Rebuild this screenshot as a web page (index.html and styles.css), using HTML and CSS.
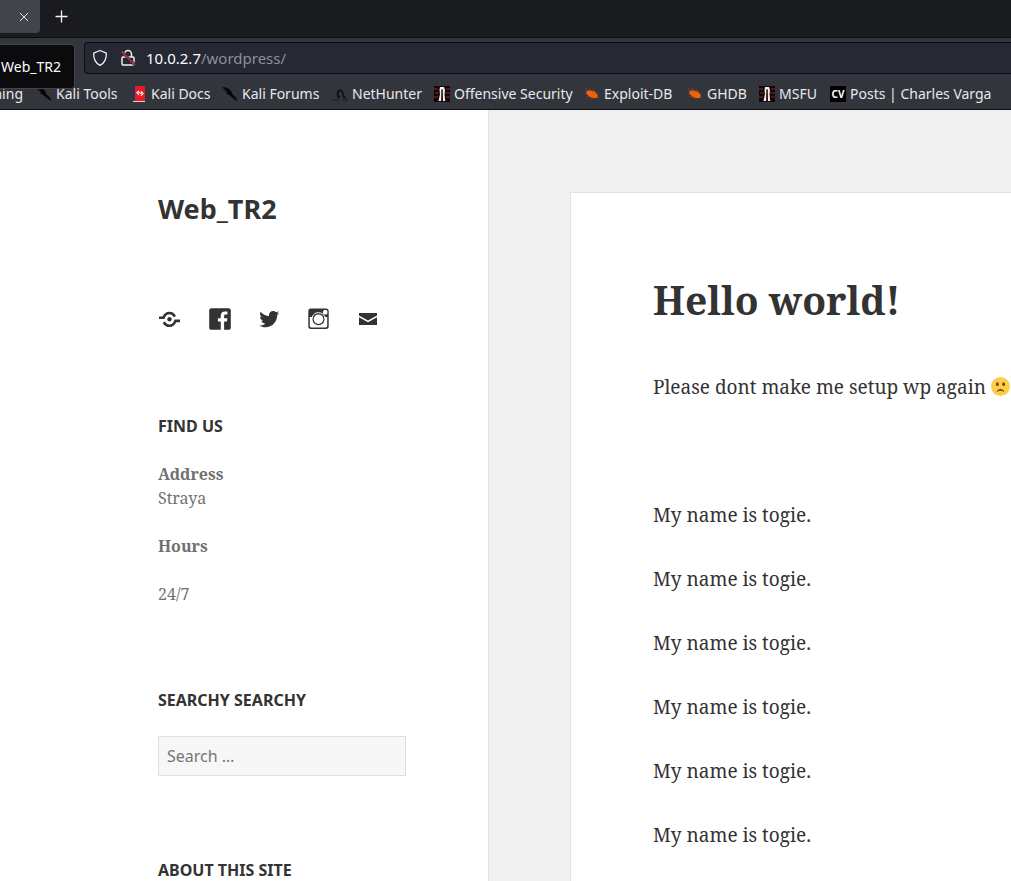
FILE: index.html
```html
<!DOCTYPE html>
<html lang="en">
<head>
<meta charset="utf-8">
<meta name="viewport" content="width=device-width, initial-scale=1">
<title>Web_TR2</title>
<link rel="stylesheet" href="styles.css">
</head>
<body>
<svg class="defs" aria-hidden="true">
  <symbol id="kali" viewBox="0 0 16 16"><path d="M0 1l4 .6 4 2 1.500 2.400L11 9l3 2.500 1.500 3.500-4-2-3-3L6 8.500 4 7l1-.5L2 4l2 .2z" fill="#050607"/><path d="M1 3l4 2M10 11l4 3" stroke="#15171a"/></symbol>
  <symbol id="offsec" viewBox="0 0 16 16"><path d="M0 0h16v16H0z" fill="#150506"/><path d="M0 3h4M1 7h4M0 11h4M12 3h4M11 7h5M12 11h4" stroke="#5a2022" stroke-width="1.500"/><path d="M6 1h4l1 3-.5 4 .7 7H9L8.500 4h-1L7.200 15H4.500L6 8l-.5-4z" fill="#f3eeee"/><path d="M7.600 3h1v12h-1z" fill="#30191a"/></symbol>
  <symbol id="bug" viewBox="0 0 16 16"><path d="M1 3l4 2M5 2l2 3M9 3l1 3M1 8l4 0M2 11l5-1M7 13l2-2M14 7l-3 1M15 12l-3-1" stroke="#8a4528" stroke-width=".8" fill="none"/><path d="M2 5.500C4 4 7 4 9 5.500l2-.3.500 1.600 2.500 2.400-.6 2.200C11 13 7 12 5 10 3.500 9 2.300 7.500 2 5.500z" fill="#f2600c"/></symbol>
</svg>
<header class="browser">
  <div class="tabs">
    <div class="tab"><button class="plain" aria-label="Close tab"><svg width="10" height="10" viewBox="0 0 10 10"><path d="M1 1l8 8M9 1L1 9" stroke="#e4e4e8" fill="none"/></svg></button></div>
    <button class="plain" aria-label="New tab"><svg width="13" height="13" viewBox="0 0 13 13"><path d="M6.500 .5v12M.5 6.500h12" stroke="#f6f6f8" stroke-width="1.300"/></svg></button>
  </div>
  <div class="nav">
    <div class="address">
      <svg width="16" height="18" viewBox="0 0 16 18"><path d="M8 1.500l6.300 2.700c.3 5.300-1.600 9.700-6.300 12.100C3.300 13.900 1.400 9.500 1.700 4.200z" fill="none" stroke="#f0f0f4" stroke-width="1.300" stroke-linejoin="round"/></svg>
      <svg width="16" height="18" viewBox="0 0 16 18"><path d="M4.500 8V5a3.500 3.500 0 0 1 7 0v3M3 8h10a1 1 0 0 1 1 1v6a1 1 0 0 1-1 1H3a1 1 0 0 1-1-1V9a1 1 0 0 1 1-1z" fill="none" stroke="#eeeef2" stroke-width="1.500"/><path d="M2 3l13 13" stroke="#262833" stroke-width="2.800"/><path d="M1.500 2.500l13.500 13.500" stroke="#e22850" stroke-width="1.300"/></svg>
      <div class="url" role="textbox" aria-label="Address" tabindex="0"><span class="host">10.0.2.7</span>/wordpress/</div>
    </div>
  </div>
  <nav class="bookmarks" aria-label="Bookmarks">
    <a href="#" class="cut">ning</a>
    <a href="#"><svg class="fav"><use href="#kali"/></svg>Kali Tools</a>
    <a href="#"><svg class="fav" viewBox="0 0 16 16"><path d="M2 0h12v16H2z" fill="#e51c23"/><path d="M2 0h2v16H2z" fill="#263554"/><path d="M2 15.500h12" stroke="#e6d5d5"/><path d="M8 5L6 6.500 8 9M10 5.500l2 2L10 10M10.500 7.500L7.500 6.500" fill="none" stroke="#fff" stroke-width="1.200"/></svg>Kali Docs</a>
    <a href="#"><svg class="fav"><use href="#kali"/></svg>Kali Forums</a>
    <a href="#"><svg class="fav" viewBox="0 0 16 16"><path d="M2 14l4-1-1-3c-1-3 0-6 3-7l3 2 1 4 3 4-4-1-1-4c0-3-3-4-3-1l1 5-2 1z" fill="#111315"/><path d="M0 14h7M10 14h6" stroke="#1d1f22"/></svg>NetHunter</a>
    <a href="#"><svg class="fav"><use href="#offsec"/></svg>Offensive Security</a>
    <a href="#"><svg class="fav"><use href="#bug"/></svg>Exploit-DB</a>
    <a href="#"><svg class="fav"><use href="#bug"/></svg>GHDB</a>
    <a href="#"><svg class="fav"><use href="#offsec"/></svg>MSFU</a>
    <a href="#"><span class="fav cv">CV</span>Posts | Charles Varga</a>
  </nav>
  <div class="tooltip" role="tooltip">Web_TR2</div>
</header>
<div class="page">
  <aside class="sidebar">
    <p class="site-title">Web_TR2</p>
    <nav class="social" aria-label="Social links">
      <a href="#" aria-label="Share"><svg viewBox="0 0 24 24"><path d="M1 10.700h4.500C6.800 7.200 8.800 6 11.400 6c2.500 0 4.300 1.200 5.500 3.600M22 13.900h-4.600c-1.300 3.600-3.300 4.900-5.900 4.900-2.500 0-4.400-1.200-5.600-3.700" fill="none" stroke="currentColor" stroke-width="2.600"/><circle cx="11.500" cy="12.300" r="2.200"/></svg></a>
      <a href="#" aria-label="Facebook"><svg viewBox="2 2 20 20"><path d="M19.200 3H4.800C3.800 3 3 3.800 3 4.800v14.400c0 1 .8 1.800 1.800 1.800h7.814v-6.971h-2.346v-2.717h2.346V9.310c0-2.325 1.420-3.591 3.494-3.591.993 0 1.847.074 2.096.107v2.430l-1.438.001c-1.128 0-1.346.536-1.346 1.323v1.734h2.690l-.35 2.717h-2.340V21H19.200c1 0 1.800-.8 1.800-1.800V4.800C21 3.800 20.200 3 19.200 3z"/></svg></a>
      <a href="#" aria-label="Twitter"><svg viewBox="0 0 24 24"><path d="M22.230 5.924c-.736.326-1.527.547-2.357.646.847-.508 1.498-1.312 1.804-2.270-.793.470-1.671.812-2.606.996C18.324 4.498 17.257 4 16.077 4c-2.266 0-4.103 1.837-4.103 4.103 0 .322.036.635.106.935C8.670 8.867 5.647 7.234 3.623 4.751 3.270 5.357 3.067 6.062 3.067 6.814c0 1.424.724 2.679 1.825 3.415-.673-.021-1.305-.206-1.859-.513v.052c0 1.988 1.414 3.647 3.292 4.023-.344.094-.707.144-1.081.144-.264 0-.521-.026-.772-.074.522 1.630 2.038 2.816 3.833 2.850-1.404 1.100-3.174 1.756-5.096 1.756-.331 0-.658-.019-.979-.057 1.816 1.164 3.973 1.843 6.290 1.843 7.547 0 11.675-6.252 11.675-11.675 0-.178-.004-.355-.012-.531.801-.577 1.496-1.300 2.046-2.123z"/></svg></a>
      <a href="#" aria-label="Instagram"><svg viewBox="0 0 24 24"><path fill-rule="evenodd" d="M4 1.500h15A2.700 2.700 0 0 1 21.700 4.200v15A2.700 2.700 0 0 1 19 21.900H4a2.700 2.700 0 0 1-2.700-2.700v-15A2.700 2.700 0 0 1 4 1.500zM2.800 10v8.800c0 1 .6 1.600 1.600 1.600h14.200c1 0 1.600-.6 1.600-1.600V10z"/><circle cx="11.500" cy="12.200" r="6" /><circle cx="11.500" cy="12.200" r="4.800" fill="#fff" /><path d="M5.300 10a6.600 6.600 0 0 1 12.400 0" fill="none" stroke="#fff"/><rect x="16" y="3" width="4.400" height="4.600" rx="1.500" fill="#fff"/></svg></a>
      <a href="#" aria-label="Email"><svg viewBox="0 0 24 24"><path d="M3 6h18v2.600l-9 5-9-5zM3 10.300l9 5 9-5V18H3z"/></svg></a>
    </nav>
    <section class="widget">
      <h2>FIND US</h2>
      <p><strong>Address</strong><br>Straya</p>
      <p><strong>Hours</strong></p>
      <p>24/7</p>
    </section>
    <section class="widget">
      <h2><label for="search">SEARCHY SEARCHY</label></h2>
      <input id="search" type="search" placeholder="Search …">
    </section>
    <section class="widget">
      <h2>ABOUT THIS SITE</h2>
    </section>
  </aside>
  <main class="main">
    <article class="post">
      <h1>Hello world!</h1>
      <p>Please dont make me setup wp again <svg class="emoji" viewBox="0 0 36 36" role="img" aria-label="Sad face"><circle cx="18" cy="18" r="18" fill="#ffcc4d"/><ellipse cx="12" cy="13.500" rx="2.500" ry="3.500" fill="#664500"/><ellipse cx="24" cy="13.500" rx="2.500" ry="3.500" fill="#664500"/><path d="M11.500 27.500c3-5.500 10-5.500 13 0-4-2.800-9-2.800-13 0z" fill="#664500" stroke="#664500"/></svg></p>
      <p>&nbsp;</p>
      <p>My name is togie.</p>
      <p>My name is togie.</p>
      <p>My name is togie.</p>
      <p>My name is togie.</p>
      <p>My name is togie.</p>
      <p>My name is togie.</p>
    </article>
  </main>
</div>
</body>
</html>
```
FILE: styles.css
```css
* { box-sizing: border-box; }
body {
  margin: 0;
  height: 100vh;
  overflow: hidden;
  display: flex;
  flex-direction: column;
  background: #f1f1f1;
  color: #333;
  font-family: "Noto Serif", "DejaVu Serif", serif;
}
h1, h2, p { margin: 0; }
a { color: inherit; text-decoration: none; }
.defs { display: none; }

.browser {
  position: relative;
  flex: none;
  background: #33353c;
  border-bottom: 1px solid #0c0c0f;
  color: #e8e8ec;
  font: 14px/20px "Noto Sans", sans-serif;
}
.tabs {
  display: flex;
  align-items: center;
  gap: 15px;
  height: 38px;
  padding-bottom: 4px;
  background: #1a1b1f;
  border-bottom: 1px solid #0c0c0f;
}
.tab {
  display: flex;
  align-items: center;
  justify-content: flex-end;
  width: 40px;
  height: 100%;
  padding-right: 11px;
  background: #42444b;
  border-radius: 0 0 4px 0;
}
.plain {
  display: flex;
  padding: 0;
  border: 0;
  background: none;
}
.nav { padding: 4px 0 4px 84px; }
.address {
  display: flex;
  align-items: center;
  gap: 12px;
  height: 32px;
  padding: 0 7px;
  background: #262833;
  border: 1px solid #0c0c12;
  border-right: 0;
  border-radius: 4px 0 0 4px;
}
.url { color: #8e8f98; font-size: 15px; margin-left: -2px; }
.host { color: #fbfbfe; }
.bookmarks {
  display: grid;
  grid-template-columns: 36px 95px 91px 110px 102px 150px 103px 72px 71px 1fr;
  align-items: center;
  height: 31px;
}
.bookmarks a {
  display: flex;
  align-items: center;
  gap: 4px;
  white-space: nowrap;
}
.bookmarks .cut {
  justify-content: flex-end;
  padding-right: 13px;
}
.fav { flex: none; width: 16px; height: 16px; }
.cv {
  background: #000;
  color: #fff;
  font: bold 10px/16px "Noto Sans", sans-serif;
  text-align: center;
}
.tooltip {
  position: absolute;
  left: 0;
  top: 44px;
  width: 75px;
  height: 45px;
  padding-right: 13px;
  display: flex;
  align-items: center;
  justify-content: flex-end;
  background: #0b0b0d;
  border: 1px solid #42444a;
  border-left: 0;
  border-radius: 0 4px 4px 0;
  color: #fbfbfe;
}

.page { flex: 1; min-height: 0; display: flex; }
.sidebar {
  flex: none;
  display: flex;
  flex-direction: column;
  gap: 82px;
  width: 489px;
  padding: 83px 82px 0 158px;
  background: #fff;
  border-right: 1px solid #e3e3e3;
}
.site-title { font: bold 27px/32px "Noto Sans", sans-serif; }
.social {
  display: grid;
  grid-template-columns: repeat(5, 1fr);
  padding-bottom: 1px;
}
.social a { display: flex; }
.social svg { width: 24px; height: 24px; fill: currentColor; }
.widget {
  display: flex;
  flex-direction: column;
  gap: 24px;
  color: #707070;
  font-size: 16px;
  line-height: 24px;
}
.widget h2 { color: #333; font: bold 16px/24px "Noto Sans", sans-serif; }
.widget input {
  width: 100%;
  height: 40px;
  padding: 0 8px;
  background: #f7f7f7;
  border: 1px solid #dfdfdf;
  border-radius: 0;
  font: 16px/24px "Noto Sans", sans-serif;
  appearance: none;
}
.widget input::placeholder { color: #757575; opacity: 1; }
.main { flex: 1; min-width: 0; padding: 82px 0 0 81px; }
.post {
  display: flex;
  flex-direction: column;
  gap: 32px;
  min-height: 100%;
  padding: 83px 0 0 82px;
  background: #fff;
  border: 1px solid #e3e3e3;
  border-width: 1px 0 0 1px;
  font-size: 19px;
  line-height: 32px;
  white-space: nowrap;
}
.post h1 { margin-bottom: 15px; font-size: 39px; line-height: 48px; }
.emoji { width: 19px; height: 19px; vertical-align: -2px; }
```
